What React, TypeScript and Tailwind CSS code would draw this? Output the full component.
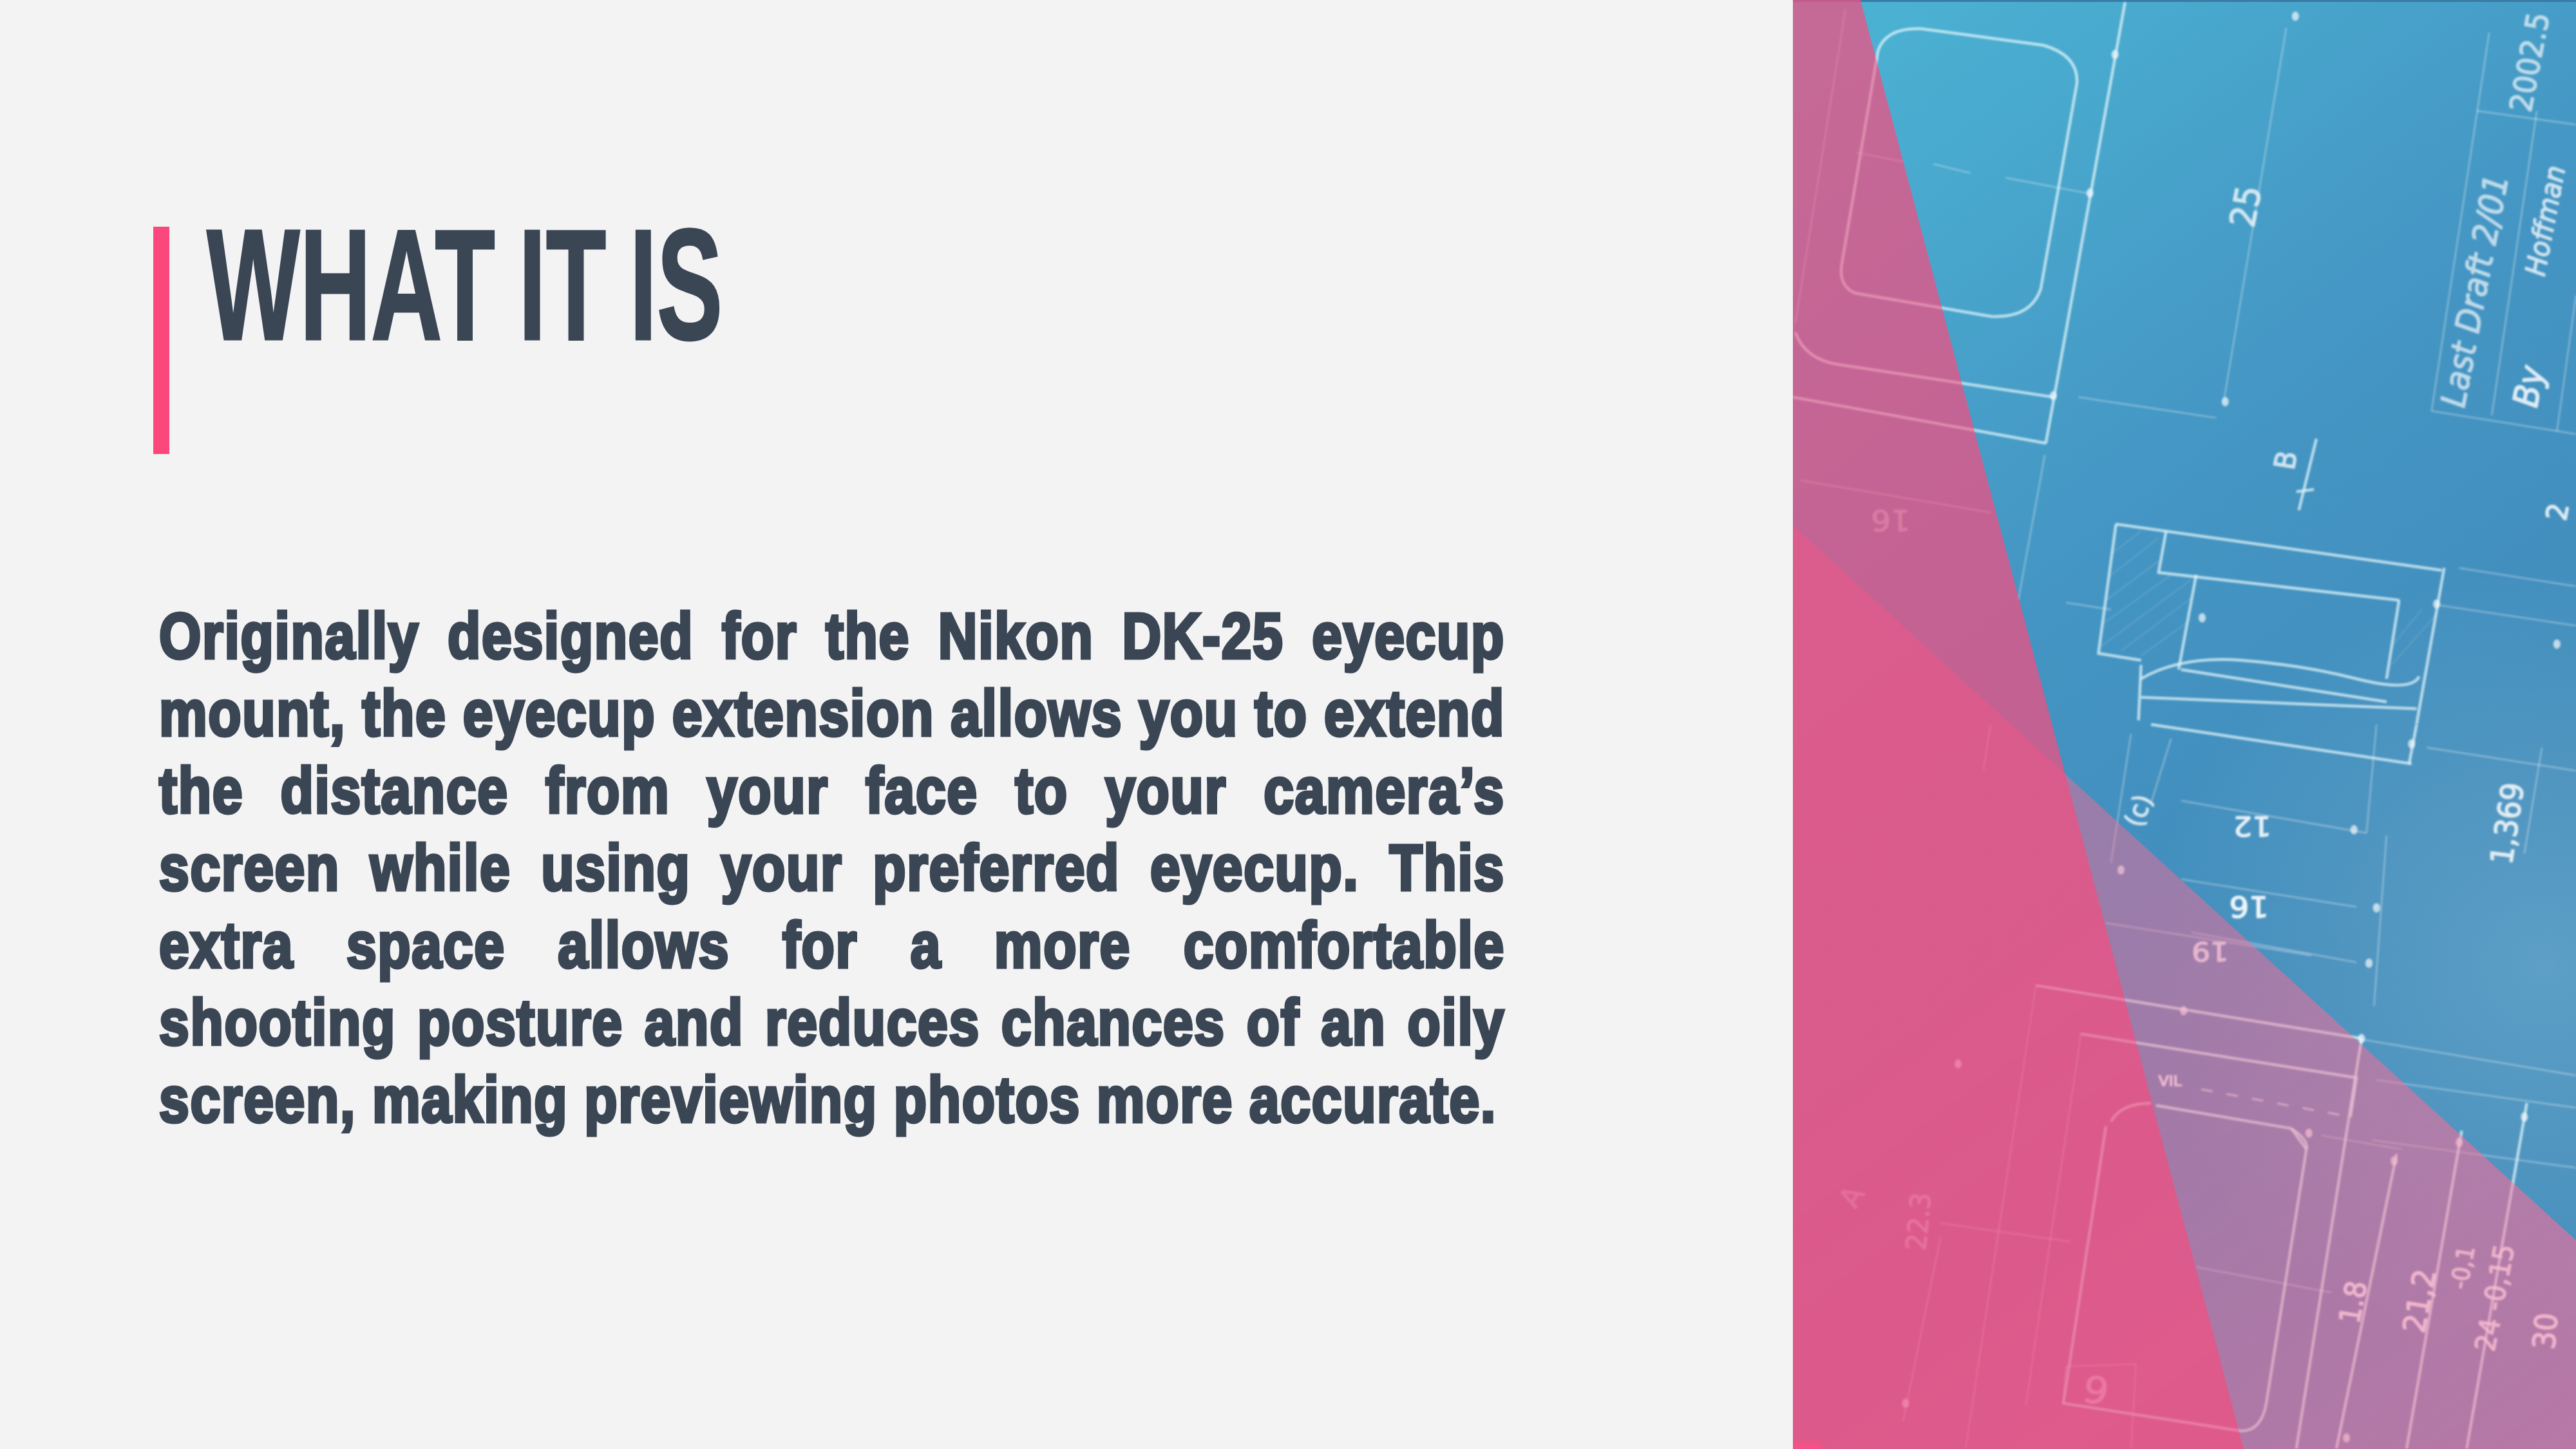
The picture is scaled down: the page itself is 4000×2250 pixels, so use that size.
const LINES = [
  "Originally designed for the Nikon DK-25 eyecup",
  "mount, the eyecup extension allows you to extend",
  "the distance from your face to your camera’s",
  "screen while using your preferred eyecup. This",
  "extra space allows for a more comfortable",
  "shooting posture and reduces chances of an oily",
];

const LAST_LINE = "screen, making previewing photos more accurate.";

type Label = { x: number; y: number; r: number; s: number; t: string; o?: number; hand?: boolean };

// upper half of the sketch, coordinates are in the group's own scaled space
const TOP_PATHS = [
  "M175 110 Q190 60 260 62 L505 98 Q575 120 572 180 L500 625 Q480 690 400 685 L130 635 Q95 620 103 570 L175 110",
  "M10 720 Q30 780 100 790 L525 860",
  "M668 5 L510 960",
  "M5 860 L510 960",
  "M650 1135 L1300 1235",
  "M650 1135 L615 1415 L700 1430",
  "M750 1150 L735 1240 L1215 1300",
  "M810 1245 L775 1450",
  "M1305 1230 L1250 1568",
  "M1215 1300 L1190 1470",
  "M700 1470 Q780 1420 900 1430 T1130 1470 T1255 1465",
  "M700 1440 L695 1560",
  "M700 1510 L1250 1535",
  "M780 1450 L1190 1520",
  "M1050 950 L1015 1105",
  "M1010 1065 L1045 1060",
];

const TOP_FAINT = [
  "M110 20 L10 700",
  "M20 1040 L400 1110",
  "M508 985 L455 1300",
  "M130 330 L225 350",
  "M285 355 L360 375",
  "M430 385 L600 420",
  "M990 60 L865 870",
  "M575 860 L850 905",
  "M1395 70 L1280 890 L1568 940",
  "M1490 240 L1400 900",
  "M1370 240 L1568 270",
  "M1568 640 L1530 935",
  "M1335 1230 L1568 1270",
  "M1290 1310 L1568 1355",
  "M550 1305 L640 1320",
];

const TOP_HATCH = [
  "M640 1200 L700 1150", "M635 1250 L735 1165", "M630 1300 L735 1215", "M625 1350 L760 1245",
  "M620 1400 L800 1255", "M660 1410 L800 1295", "M700 1420 L790 1350", "M1200 1440 L1290 1330",
  "M1200 1400 L1260 1320",
];

const TOP_LABELS: Label[] = [
  { x: 925, y: 495, r: -80, s: 70, t: "25" },
  { x: 1345, y: 885, r: -80, s: 68, t: "Last Draft 2/01", o: 0.6, hand: true },
  { x: 1490, y: 885, r: -80, s: 70, t: "By", o: 0.8, hand: true },
  { x: 1505, y: 600, r: -80, s: 56, t: "Hoffman", o: 0.7, hand: true },
  { x: 1478, y: 245, r: -80, s: 62, t: "2002.5", o: 0.6 },
  { x: 1005, y: 1020, r: -80, s: 58, t: "B", o: 0.7 },
  { x: 1548, y: 1130, r: -80, s: 58, t: "2", o: 0.8 },
  { x: 240, y: 1105, r: 180, s: 62, t: "16", o: 0.35 },
];

// lower half of the sketch
const BOTTOM_PATHS = [
  "M720 0 L1240 85",
  "M1250 0 L1235 85",
  "M490 565 L1140 680",
  "M1140 680 L1010 1568",
  "M580 670 L1130 765 L1118 850",
  "M730 825 L1000 875 Q1035 900 1030 920 L950 1470 Q940 1530 900 1530",
  "M640 860 Q660 820 720 820",
  "M630 870 L545 1470 L900 1530",
  "M1340 880 L1230 1568",
  "M1470 820 L1350 1568",
  "M1210 930 L1090 1568",
  "M1000 875 L1030 920",
];

const BOTTOM_FAINT = [
  "M1170 0 L1150 235",
  "M680 20 L640 300",
  "M760 30 L720 170",
  "M1270 50 L1568 100",
  "M1500 50 L1465 280",
  "M780 165 L1150 235",
  "M1190 240 L1165 610",
  "M780 335 L1130 395",
  "M800 450 L1130 515",
  "M490 565 L350 1568",
  "M580 670 L470 1475",
  "M300 1110 L225 1510",
  "M550 1390 L690 1385 L680 1568",
  "M550 1390 L545 1470",
  "M1060 890 L1220 920",
  "M1130 680 L1568 760",
  "M1170 770 L1568 830",
  "M1160 900 L1568 960",
  "M630 430 L1040 500",
  "M300 1080 L560 1120",
  "M810 1175 L1080 1230",
  "M400 0 L385 100",
];

const BOTTOM_LABELS: Label[] = [
  { x: 700, y: 225, r: -70, s: 52, t: "(c)", o: 0.75 },
  { x: 960, y: 200, r: 180, s: 60, t: "12", o: 0.85 },
  { x: 1440, y: 305, r: -82, s: 62, t: "1,369", o: 0.8 },
  { x: 955, y: 372, r: 180, s: 62, t: "16", o: 0.9 },
  { x: 875, y: 472, r: 180, s: 58, t: "19", o: 0.75 },
  { x: 735, y: 782, r: 0, s: 30, t: "VIL", o: 0.85 },
  { x: 1135, y: 1300, r: -80, s: 58, t: "1.8", o: 0.85 },
  { x: 1265, y: 1320, r: -80, s: 62, t: "21,2", o: 0.85 },
  { x: 1350, y: 1225, r: -80, s: 48, t: "-0,1", o: 0.8 },
  { x: 1405, y: 1360, r: -80, s: 56, t: "24 -0,15", o: 0.8 },
  { x: 1525, y: 1355, r: -85, s: 62, t: "30", o: 0.85 },
  { x: 270, y: 1140, r: -85, s: 56, t: "22.3", o: 0.4 },
  { x: 130, y: 1050, r: -60, s: 58, t: "A", o: 0.35 },
  { x: 580, y: 1465, r: 10, s: 80, t: "9", o: 0.5 },
];

const TOP_DOTS = [
  [648, 118], [868, 870], [822, 1338], [525, 857], [598, 418], [1290, 1308], [1530, 1395], [1008, 35],
];

const BOTTOM_DOTS = [
  [1240, 42], [1125, 228], [1170, 397], [1155, 517], [1140, 680], [785, 620], [1035, 885], [335, 735], [1205, 945],
  [1335, 905], [1465, 850], [230, 1470], [1110, 1545], [660, 315],
];

function Sketch({ paths, faint, labels, dots, hatch = [] }: { paths: string[]; faint: string[]; labels: Label[]; dots: number[][]; hatch?: string[] }) {
  return (
    <>
      {faint.map((d) => (
        <path key={d} d={d} fill="none" stroke="#fff" strokeOpacity={0.28} strokeWidth={2.5} vectorEffect="non-scaling-stroke" />
      ))}
      {hatch.map((d) => (
        <path key={d} d={d} fill="none" stroke="#fff" strokeOpacity={0.16} strokeWidth={1.5} vectorEffect="non-scaling-stroke" />
      ))}
      {paths.map((d) => (
        <path key={d} d={d} fill="none" stroke="#e2f6fb" strokeOpacity={0.72} strokeWidth={4} vectorEffect="non-scaling-stroke" />
      ))}
      {dots.map(([x, y]) => (
        <ellipse key={`${x}-${y}`} cx={x} cy={y} rx={7} ry={10} fill="#fff" fillOpacity={0.6} />
      ))}
      {labels.map((l) => (
        <text
          key={l.t + l.x}
          transform={`translate(${l.x} ${l.y}) rotate(${l.r})`}
          fontFamily="'DejaVu Sans', sans-serif"
          fontStyle={l.hand ? "italic" : "normal"}
          fontSize={l.s}
          fill="#fff"
          stroke="#fff"
          strokeWidth={1.5}
          opacity={l.o ?? 0.7}
        >
          {l.t}
        </text>
      ))}
    </>
  );
}

function DrawingLayer() {
  return (
    <>
      <g transform="translate(2780 0) scale(0.778 0.717)">
        <Sketch paths={TOP_PATHS} faint={TOP_FAINT} labels={TOP_LABELS} dots={TOP_DOTS} hatch={TOP_HATCH} />
      </g>
      <g transform="translate(2780 1125) scale(0.778 0.717)">
        <Sketch paths={BOTTOM_PATHS} faint={BOTTOM_FAINT} labels={BOTTOM_LABELS} dots={BOTTOM_DOTS} />
        <path
          d="M820 790 L1120 850"
          fill="none"
          stroke="#fff"
          strokeOpacity={0.5}
          strokeWidth={3}
          strokeDasharray="18 22"
          vectorEffect="non-scaling-stroke"
        />
      </g>
    </>
  );
}

function Blueprint() {
  return (
    <svg viewBox="2784 0 1216 2250" className="block h-full w-full" preserveAspectRatio="none">
      <defs>
        <linearGradient id="blue" gradientUnits="userSpaceOnUse" x1="2900" y1="0" x2="3900" y2="1300">
          <stop offset="0" stopColor="#4bb2d3" />
          <stop offset="0.55" stopColor="#4495c3" />
          <stop offset="1" stopColor="#418bbb" />
        </linearGradient>
        <radialGradient id="haze" gradientUnits="userSpaceOnUse" cx="3950" cy="1500" r="620">
          <stop offset="0" stopColor="#7fb7d2" stopOpacity={0.45} />
          <stop offset="1" stopColor="#7fb7d2" stopOpacity={0} />
        </radialGradient>
        <linearGradient id="mauve" gradientUnits="userSpaceOnUse" x1="3300" y1="1300" x2="4000" y2="2250">
          <stop offset="0" stopColor="#ef6b96" stopOpacity={0.5} />
          <stop offset="1" stopColor="#f56f9c" stopOpacity={0.66} />
        </linearGradient>
      </defs>
      <rect x="2784" y="0" width="1216" height="2250" fill="url(#blue)" />
      <rect x="3300" y="900" width="700" height="1350" fill="url(#haze)" />
      <rect x="2784" y="0" width="1216" height="3" fill="#3a7ba6" />
      <g className="blur-[1.5px]">
        <DrawingLayer />
      </g>
      {/* the two pink planes: the diagonal one goes under the steep one */}
      <polygon points="2784,816 4000,1926 4000,2250 2784,2250" fill="url(#mauve)" />
      <polygon points="2784,0 2889,0 3484,2250 2784,2250" fill="#f05082" fillOpacity={0.74} />
      {/* lines still read through the pink, so a weak copy sits on top */}
      <g className="opacity-30 blur-[1.5px]">
        <DrawingLayer />
      </g>
      <rect x="2786" y="2240" width="42" height="10" fill="#fb4f87" className="blur-[3px]" />
    </svg>
  );
}

export default function App() {
  return (
    <div className="flex h-[2250px] w-[4000px] overflow-hidden bg-[#f3f3f3] text-[#3b4655] [font-family:'Liberation_Sans',Arial,sans-serif]">
      <main className="w-[2784px] shrink-0 pl-[238px] pt-[352px]">
        <header className="flex items-start">
          <div className="h-[353px] w-[25px] bg-[#fb477b]" />
          <h1 className="ml-[58px] mt-[-32px] w-[1400px] origin-left scale-x-[0.625] whitespace-nowrap text-[245px] font-bold leading-none [word-spacing:-10px] [-webkit-text-stroke:3px_#3b4655]">
            WHAT IT IS
          </h1>
        </header>
        <div className="ml-[9px] mt-[222px] w-[2488px] origin-left scale-x-[0.84] text-[100px] font-bold leading-[120px] tracking-[2px] [-webkit-text-stroke:5px_#3b4655]">
          {LINES.map((line) => (
            <p key={line} className="text-justify [text-align-last:justify]">
              {line}
            </p>
          ))}
          <p className="whitespace-nowrap">{LAST_LINE}</p>
        </div>
      </main>
      <aside className="h-full w-[1216px] shrink-0">
        <Blueprint />
      </aside>
    </div>
  );
}
